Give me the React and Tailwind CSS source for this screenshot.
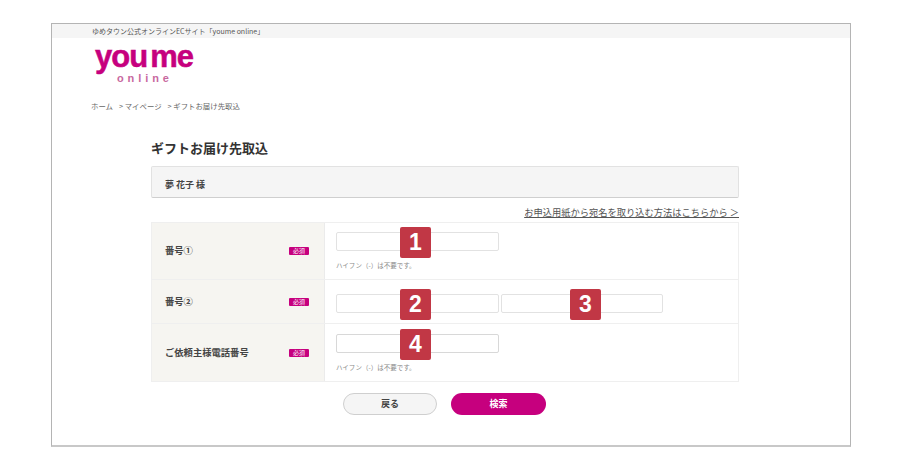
const font = { fontFamily: '"Noto Sans CJK JP", "Liberation Sans", sans-serif' };

function Req() {
  return (
    <span className="flex h-[8px] w-[20px] shrink-0 items-center justify-center rounded-[1px] bg-[#c6007e] text-[6px] leading-none text-white">
      必須
    </span>
  );
}

function Field({ n, border = "border-[#e2e2e2]" }) {
  return (
    <div className={`relative h-[19px] w-[163px] rounded-[2px] border bg-white ${border}`}>
      <span className="absolute left-[63px] top-[-6px] flex h-[31px] w-[31px] items-center justify-center rounded-[2px] bg-[#c13745] text-[23px] font-bold leading-none text-white [font-family:'Liberation_Sans',sans-serif]">
        {n}
      </span>
    </div>
  );
}

function Hint() {
  return <p className="mt-[10px] text-[6.5px] leading-[9px] text-[#8a8a8a]">ハイフン（-）は不要です。</p>;
}

function Row({ label, h, children, last, pt }) {
  return (
    <div className={`flex ${h} ${last ? "" : "border-b border-[#efefef]"}`}>
      <div className="flex w-[173px] shrink-0 items-center justify-between border-r border-[#ebebeb] bg-[#f6f5f1] pl-[13px] pr-[15px]">
        <span className="text-[9.3px] font-bold leading-none text-[#444]">{label}</span>
        <Req />
      </div>
      <div className={`flex-1 pl-[11px] ${pt}`}>{children}</div>
    </div>
  );
}

export default function App() {
  return (
    <div className="h-[466px] w-[908px] overflow-hidden bg-white pl-[51px] pt-[23px]" style={font}>
      <div className="h-[424px] w-[800px] border border-b-2 border-[#b4b4b4] border-b-[#c8c8c8] bg-white">
        <div className="h-[14px] bg-[#f5f5f5] pl-[40px] text-[7px] leading-[14px] text-[#555]">
          ゆめタウン公式オンラインECサイト「youme online」
        </div>

        <div className="ml-[43px] mt-[5px] h-[49px] w-[102px] text-[#c6007e] [font-family:'Liberation_Sans',sans-serif]">
          <div className="h-[27px] text-[31px] font-bold leading-[27px] tracking-[-1px] [-webkit-text-stroke:0.5px_#c6007e]">
            you<span className="ml-[3px]">me</span>
          </div>
          <div className="mt-[1px] pl-[22px] text-[11px] font-bold leading-[14px] tracking-[3.9px] text-[#c8699f]">online</div>
        </div>

        <div className="ml-[39px] mt-[9px] flex gap-[6px] text-[7.4px] leading-[10px] text-[#666]">
          <span>ホーム</span>
          <span>&gt; マイページ</span>
          <span>&gt; ギフトお届け先取込</span>
        </div>

        <div className="ml-[99px] mt-[28px] w-[588px]">
          <h1 className="text-[13px] font-bold leading-[18px] text-[#333]">ギフトお届け先取込</h1>
          <div className="mt-[9px] h-[32px] rounded-[2px] border border-[#e2e2e2] border-b-[#cfcfcf] bg-[#f5f5f5] pl-[13px] text-[9px] font-bold leading-[35px] text-[#444]">
            夢 花子 様
          </div>
          <div className="mt-[7px] h-[17px] text-right text-[9.25px] leading-[15px] text-[#555] underline">
            お申込用紙から宛名を取り込む方法はこちらから ＞
          </div>
          <div className="h-[160px] border border-[#efefef]">
            <Row label="番号①" h="h-[57px]" pt="pt-[9px]">
              <Field n="1" />
              <Hint />
            </Row>
            <Row label="番号②" h="h-[44px]" pt="pt-[14px]">
              <div className="flex gap-[2px]">
                <Field n="2" />
                <div className="relative h-[19px] w-[162px] rounded-[2px] border border-[#e2e2e2] bg-white">
                  <span className="absolute left-[68px] top-[-6px] flex h-[31px] w-[31px] items-center justify-center rounded-[2px] bg-[#c13745] text-[23px] font-bold leading-none text-white [font-family:'Liberation_Sans',sans-serif]">
                    3
                  </span>
                </div>
              </div>
            </Row>
            <Row label="ご依頼主様電話番号" h="h-[57px]" pt="pt-[10px]" last>
              <Field n="4" border="border-[#d8d8d8]" />
              <Hint />
            </Row>
          </div>
          <div className="ml-[192px] mt-[11px] flex gap-[14px]">
            <div className="flex h-[22px] w-[94px] items-center justify-center rounded-full border border-[#cfcfcf] bg-[#f5f5f5] text-[9px] font-bold text-[#444]">
              戻る
            </div>
            <div className="flex h-[22px] w-[95px] items-center justify-center rounded-full bg-[#c6007e] text-[9px] font-bold text-white">
              検索
            </div>
          </div>
        </div>
      </div>
    </div>
  );
}
